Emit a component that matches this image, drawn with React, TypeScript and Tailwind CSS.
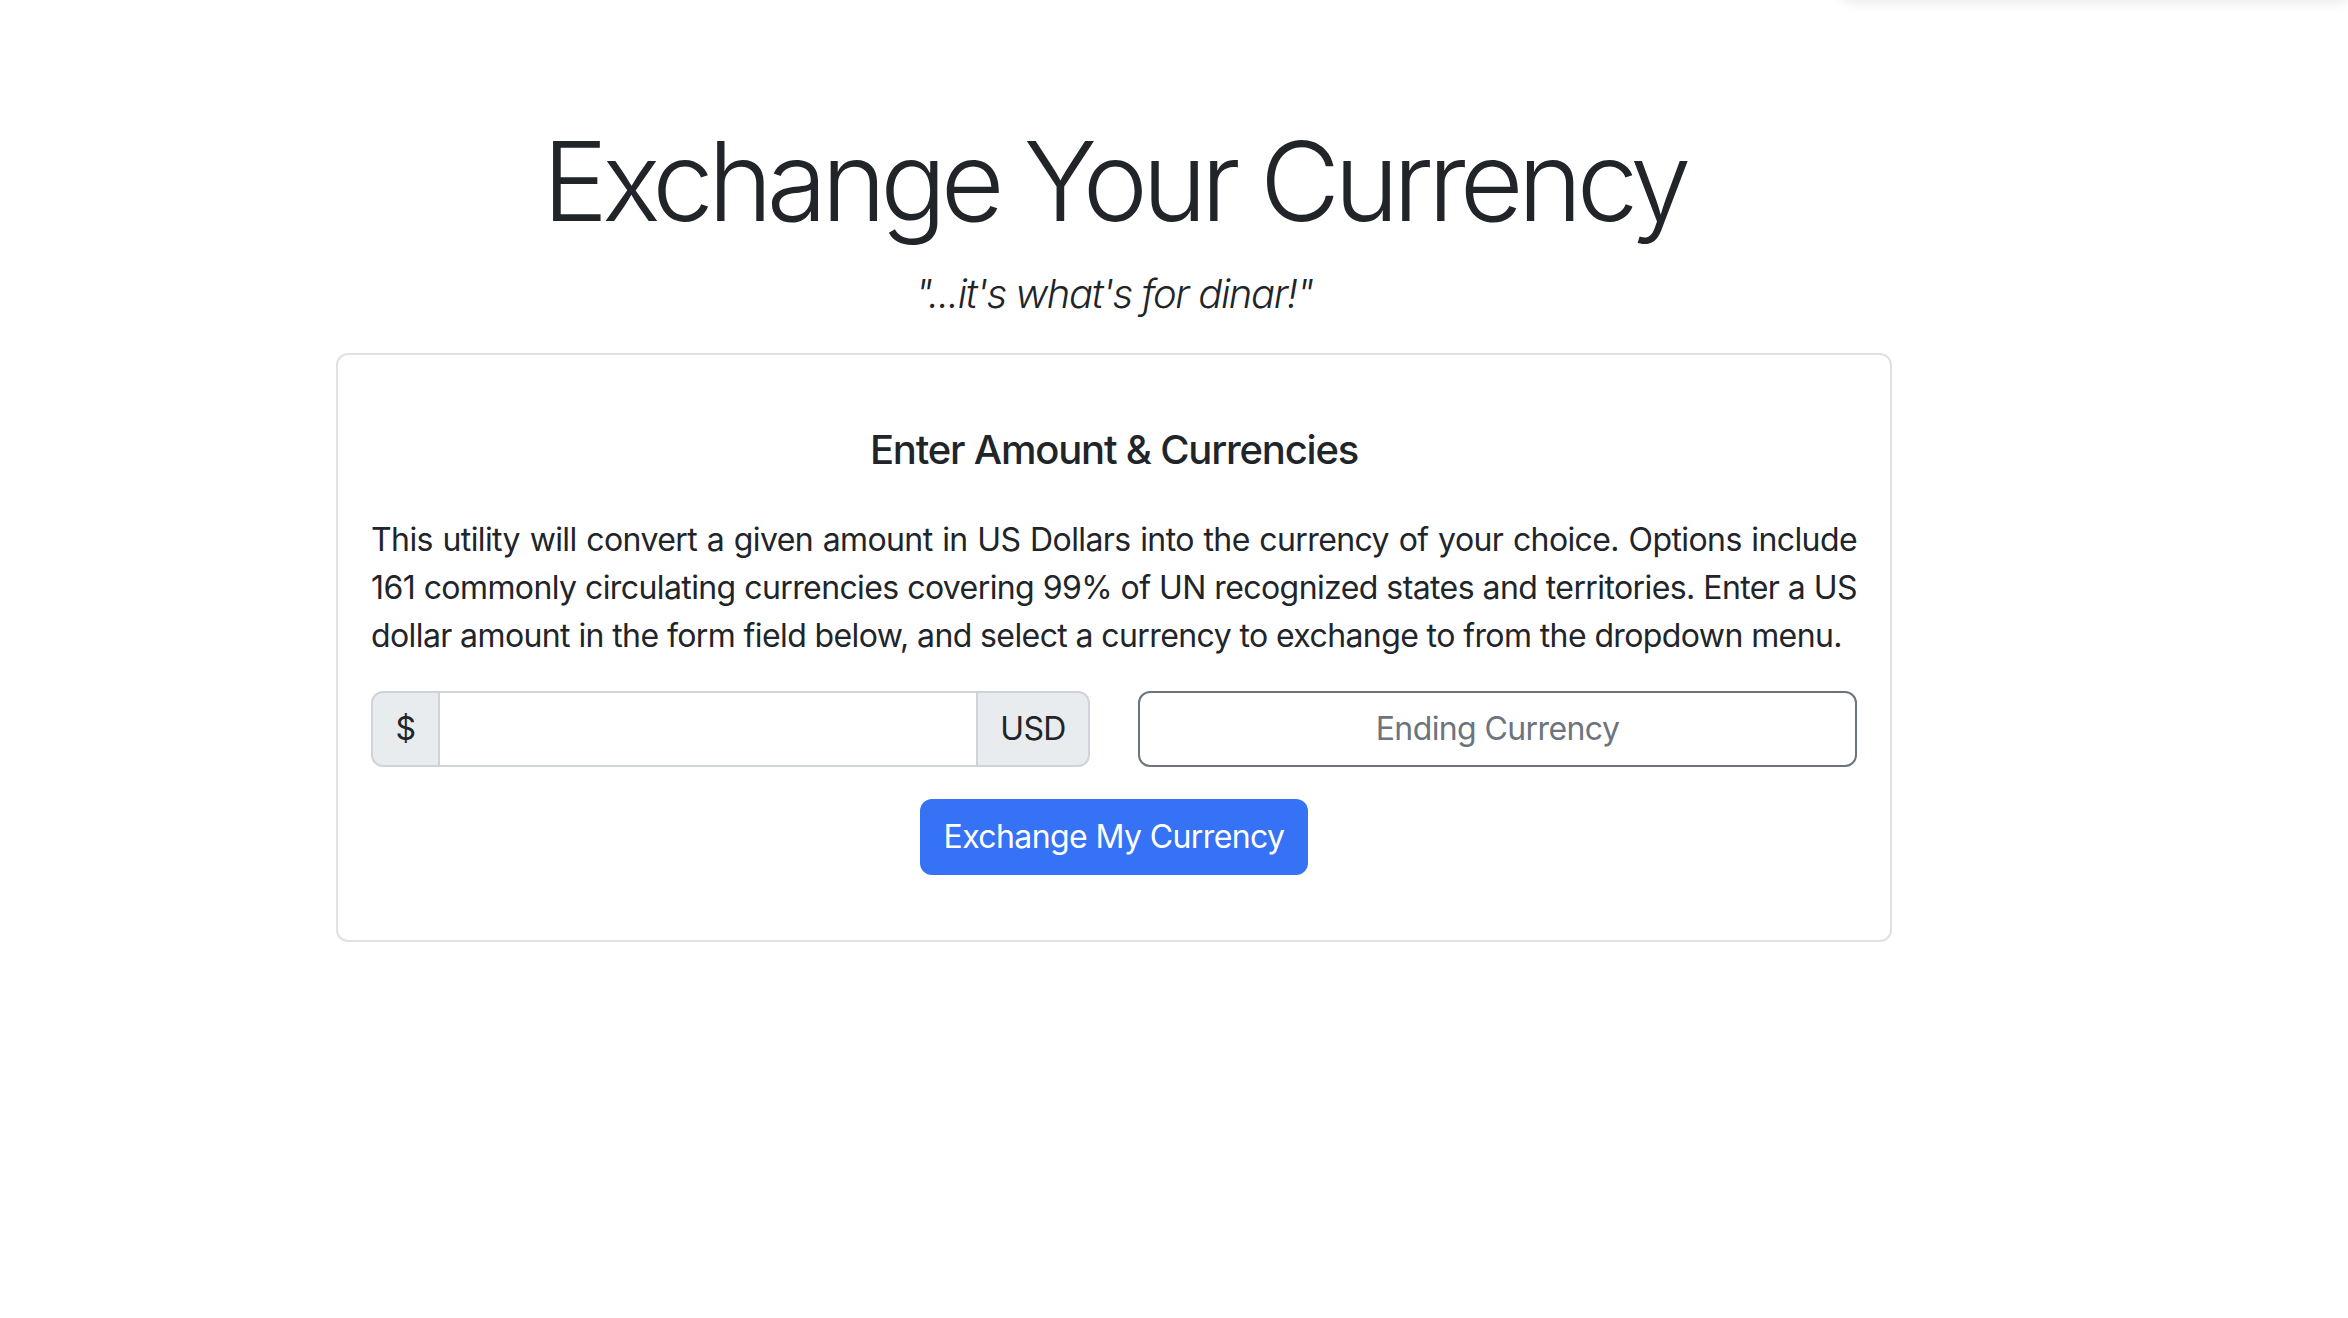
import { useState } from 'react'

const font = { fontFamily: 'Inter, "Noto Sans", "Liberation Sans", sans-serif' }

export default function App() {
  const [amount, setAmount] = useState('')
  const [currency, setCurrency] = useState('')

  return (
    <div className="relative min-h-screen bg-white text-[#212529] overflow-hidden tracking-[-0.6px]" style={font}>
      {/* faint popup shadow at top right */}
      <div className="absolute -top-[30px] right-0 w-[506px] h-[30px] bg-white shadow-[0_0_14px_rgba(0,0,0,0.12)] rounded-bl-lg" />

      <div className="ml-[336px] w-[1556px]">
        {/* Header */}
        <h1 className="pt-[115px] text-center text-[110px] font-light leading-[1.2] tracking-[-0.053em]">
          Exchange Your Currency
        </h1>
        <p className="mt-[17px] text-center text-[40px] font-light italic leading-[1.5] tracking-[-0.035em]">
          "...it's what's for dinar!"
        </p>

        {/* Card */}
        <div className="mt-[29px] border-2 border-[#dfe1e4] rounded-[12px] px-[33px] pt-[71px] pb-[65px]">
          <h5 className="text-center text-[40px] font-medium leading-[1.2] mb-[42px] tracking-[-0.03em]">
            Enter Amount &amp; Currencies
          </h5>
          <p className="text-[32px] leading-[48px] text-justify mb-[31px]">
            This utility will convert a given amount in US Dollars into the currency of your choice. Options include
            161 commonly circulating currencies covering 99% of UN recognized states and territories. Enter a US
            dollar amount in the form field below, and select a currency to exchange to from the dropdown menu.
          </p>

          <div className="grid grid-cols-2 gap-[48px]">
            <div className="flex h-[76px]">
              <span className="flex items-center justify-center w-[69px] bg-[#e9ecef] border-2 border-[#ced4da] rounded-l-[12px] text-[32px]">
                $
              </span>
              <input
                value={amount}
                onChange={e => setAmount(e.target.value)}
                className="flex-1 min-w-0 border-y-2 border-[#ced4da] px-[24px] text-[32px] outline-none"
              />
              <span className="flex items-center justify-center w-[114px] bg-[#e9ecef] border-2 border-[#ced4da] rounded-r-[12px] text-[32px]">
                USD
              </span>
            </div>
            <select
              value={currency}
              onChange={e => setCurrency(e.target.value)}
              className="h-[76px] appearance-none border-2 border-[#6c757d] rounded-[12px] bg-white text-center text-[32px] text-[#6c757d] outline-none"
            >
              <option value="">Ending Currency</option>
              <option value="EUR">EUR</option>
              <option value="GBP">GBP</option>
              <option value="JPY">JPY</option>
            </select>
          </div>

          <div className="flex justify-center mt-[32px]">
            <button className="h-[76px] px-[24px] bg-[#3672f6] text-white text-[32px] rounded-[12px]">
              Exchange My Currency
            </button>
          </div>
        </div>
      </div>
    </div>
  )
}
